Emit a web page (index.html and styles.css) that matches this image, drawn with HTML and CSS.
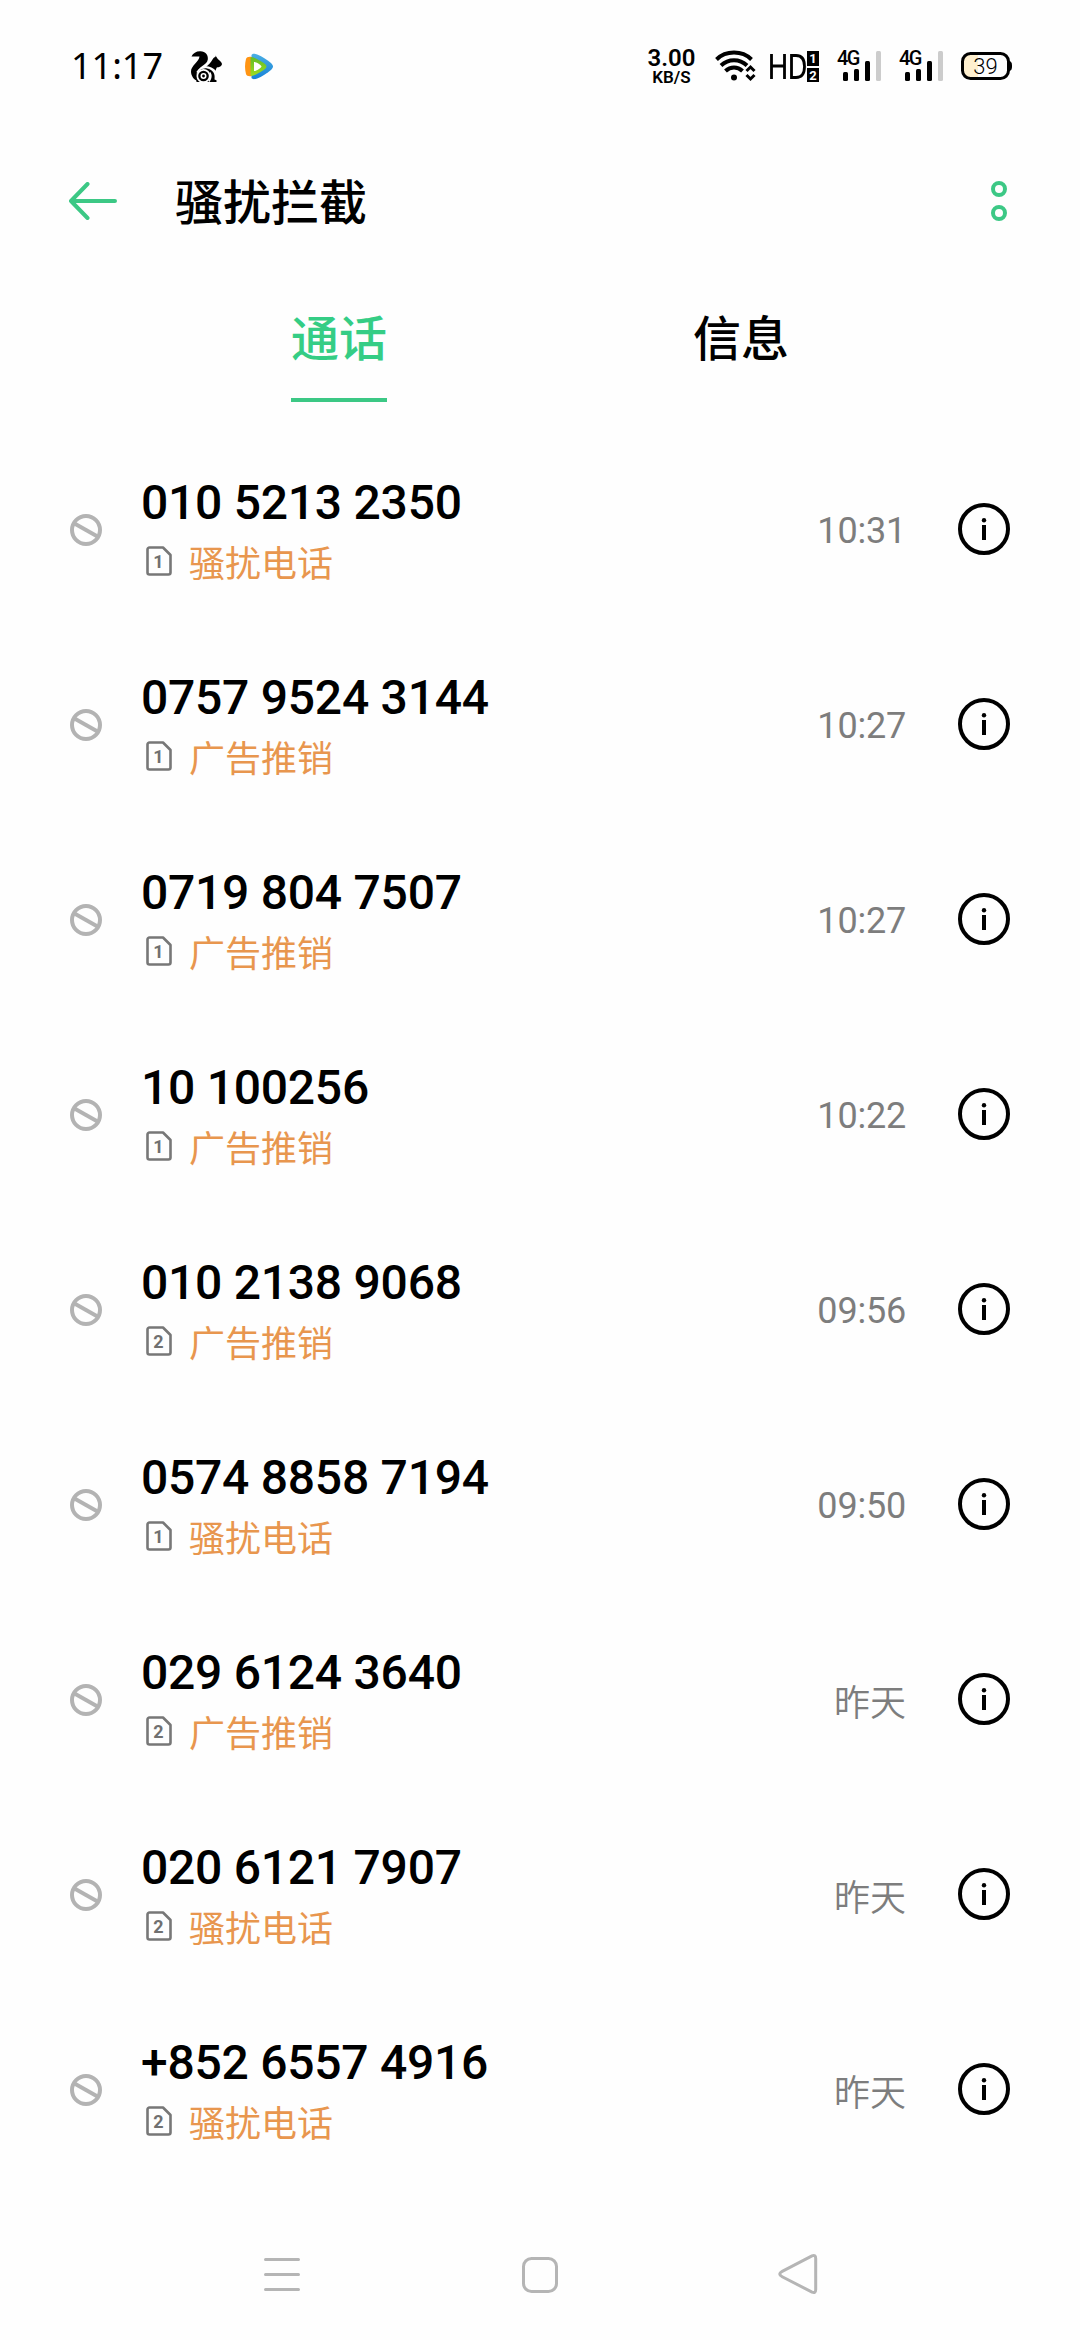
FILE: index.html
```html
<!DOCTYPE html>
<html lang="zh-CN">
<head>
<meta charset="utf-8">
<title>骚扰拦截</title>
<link rel="stylesheet" href="styles.css">
</head>
<body>
<svg class="sprite" aria-hidden="true">
  <symbol id="block" viewBox="0 0 32 32"><g fill="none" stroke="#b3b3b3" stroke-width="4"><circle cx="16" cy="16" r="14"/><path d="M4.500 9.500 27.500 22.500"/></g></symbol>
  <symbol id="info" viewBox="0 0 52 52"><circle cx="26" cy="26" r="24" fill="none" stroke="#000" stroke-width="4"/><circle cx="26" cy="17.300" r="2.200"/><path d="M24 22h4v15h-4z"/></symbol>
  <symbol id="sim" viewBox="0 0 26 30"><path d="M3.500 1.500H17L24.500 9V26.500a2 2 0 0 1-2 2H3.500a2 2 0 0 1-2-2V3.500a2 2 0 0 1 2-2z" fill="none" stroke="#777" stroke-width="2.600" stroke-linejoin="round"/></symbol>
  <symbol id="bars" viewBox="0 0 38 30"><g><rect x="0" y="21" width="5" height="9" rx="1.500"/><rect x="11" y="18" width="5" height="12" rx="1.500"/><rect x="22" y="10" width="5" height="20" rx="1.500"/><rect x="33" y="0" width="5" height="30" rx="1.500" fill="#ccc"/></g></symbol>
</svg>

<header class="status">
  <span class="clock">11:17</span>
  <svg class="squirrel" viewBox="0 0 31 31">
    <path d="M8.500 5.500H.5C2 2 5.500 0 9.500.2c5 .2 8 4 7.300 8.300-.5 3-2.500 4.300-4.800 6-3.500 2.500-5.500 4.500-6.500 8.500-.5 2.300 0 4.500 1 7C2.500 28.500 0 24.500 0 20.500c0-6 8-9.500 8.500-15z"/>
    <path d="M14 17c4-3.500 6-6 7.500-8.500 1-1.500 1.500-2.500 3-2.500V4.500l2.300 3.500c2 2 4 3.200 4.200 5-.3 2.500-3 3.200-5.200 3.500-1 1.500-1.200 3-1.200 4.500-2-3.500-6-4.500-10.600-4z"/>
    <path d="M5 26C5.500 18 14 15 20 19c3.500 2.300 4 6 3.500 9.500l2 .8V31H5.500z"/>
    <path d="M6 21.500C10 15 18 14 25 21" fill="none" stroke="#fff" stroke-width="1.600"/>
    <circle cx="12.500" cy="25" r="7" fill="#fff"/>
    <circle cx="12.500" cy="25" r="5.300"/>
    <circle cx="12.500" cy="25" r="2.200" fill="none" stroke="#fff" stroke-width="1.600"/>
    <path d="M18 30.500c2-3 2.500-6 1-9" fill="none" stroke="#fff" stroke-width="1.500"/>
  </svg>
  <svg class="play" viewBox="0 0 28 27">
    <defs><linearGradient id="blue" x2="0" y2="1"><stop stop-color="#4aaee3"/><stop offset="1" stop-color="#1682d8"/></linearGradient>
    <linearGradient id="green" x2="0" y2="1"><stop stop-color="#63bd27"/><stop offset="1" stop-color="#9ddc22"/></linearGradient></defs>
    <path d="M6.500 2C8 0 11 .3 19 5c6.500 4 9 6.500 9 8.500s-2.500 4.500-9 8.500c-8 4.700-11 5-12.500 3z" fill="url(#blue)"/>
    <path d="M1 6C1.500 4 4 3.500 7 4v19c-3 .5-5.500 0-6-2-1.300-5-1.300-10 0-15z" fill="#ff9413"/>
    <path d="M5.500 4.500c1.500-1 5 .5 10 3.500 4.500 2.700 6 4 6 5.500s-1.500 2.800-6 5.500c-5 3-8.500 4.500-10 3.500z" fill="url(#green)"/>
    <path d="M9 9c1-.8 7.500 3 7.500 4.500S10 18.800 9 18z" fill="#fff"/>
  </svg>
  <span class="grow"></span>
  <span class="speed"><b>3.00</b><small>KB/S</small></span>
  <svg class="wifi" viewBox="0 0 41 32">
    <g fill="none" stroke="#000" stroke-width="4"><path d="M1.500 9.500C11 .3 27 .3 36.500 9.500"/><path d="M6 15.500c7.500-7 18.500-7 26 0"/><path d="M10.500 21c5-4.800 12-4.800 17 0" /></g>
    <circle cx="19" cy="27.500" r="3"/>
    <path d="M31.500 21l4-4 4 4M31.500 25l4 4 4-4" fill="none" stroke="#000" stroke-width="3"/>
  </svg>
  <svg class="hd" viewBox="0 0 49 31">
    <path d="M1.500 3v25M14.500 3v25M1.500 15h13M21.500 4.500h4.500c6 0 8.500 4 8.500 11s-2.500 11-8.500 11h-4.500z" fill="none" stroke="#000" stroke-width="2.800"/>
    <path d="M37 0h12v15H37zM37 17h12v14H37z"/>
    <text x="43" y="12" class="hd-num">1</text><text x="43" y="28.500" class="hd-num">2</text>
  </svg>
  <span class="cell"><span>4G</span><svg><use href="#bars"/></svg></span>
  <span class="cell"><span>4G</span><svg><use href="#bars"/></svg></span>
  <svg class="battery" viewBox="0 0 51 28">
    <path d="M9 2h8v24H9a7.500 7.500 0 0 1-7.500-7.500v-9A7.500 7.500 0 0 1 9 2z" fill="#fff0cf"/>
    <rect x="1.500" y="1.500" width="46" height="25" rx="8" fill="none" stroke="#000" stroke-width="3"/>
    <path d="M47 9c3.500 0 4 2 4 5s-.5 5-4 5z"/>
    <text x="24.500" y="21.500" class="bat-num">39</text>
  </svg>
</header>

<div class="toolbar">
  <svg class="back" viewBox="0 0 48 38"><path d="M18.500 2 2 19l16.500 17M2 19h44" fill="none" stroke="#3cc885" stroke-width="4" stroke-linecap="round" stroke-linejoin="round"/></svg>
  <h1>骚扰拦截</h1>
  <svg class="more" viewBox="0 0 16 40"><g fill="none" stroke="#3cc885" stroke-width="4"><circle cx="8" cy="8" r="6"/><circle cx="8" cy="32" r="6"/></g></svg>
</div>

<nav class="tabs"><span class="tab active">通话</span><span class="tab">信息</span></nav>

<main class="list">
  <div class="row"><svg class="block"><use href="#block"/></svg><div class="who"><b>010 5213 2350</b><p><span class="sim"><svg><use href="#sim"/></svg><i>1</i></span>骚扰电话</p></div><time>10:31</time><svg class="info"><use href="#info"/></svg></div>
  <div class="row"><svg class="block"><use href="#block"/></svg><div class="who"><b>0757 9524 3144</b><p><span class="sim"><svg><use href="#sim"/></svg><i>1</i></span>广告推销</p></div><time>10:27</time><svg class="info"><use href="#info"/></svg></div>
  <div class="row"><svg class="block"><use href="#block"/></svg><div class="who"><b>0719 804 7507</b><p><span class="sim"><svg><use href="#sim"/></svg><i>1</i></span>广告推销</p></div><time>10:27</time><svg class="info"><use href="#info"/></svg></div>
  <div class="row"><svg class="block"><use href="#block"/></svg><div class="who"><b>10 100256</b><p><span class="sim"><svg><use href="#sim"/></svg><i>1</i></span>广告推销</p></div><time>10:22</time><svg class="info"><use href="#info"/></svg></div>
  <div class="row"><svg class="block"><use href="#block"/></svg><div class="who"><b>010 2138 9068</b><p><span class="sim"><svg><use href="#sim"/></svg><i>2</i></span>广告推销</p></div><time>09:56</time><svg class="info"><use href="#info"/></svg></div>
  <div class="row"><svg class="block"><use href="#block"/></svg><div class="who"><b>0574 8858 7194</b><p><span class="sim"><svg><use href="#sim"/></svg><i>1</i></span>骚扰电话</p></div><time>09:50</time><svg class="info"><use href="#info"/></svg></div>
  <div class="row"><svg class="block"><use href="#block"/></svg><div class="who"><b>029 6124 3640</b><p><span class="sim"><svg><use href="#sim"/></svg><i>2</i></span>广告推销</p></div><time class="cjk">昨天</time><svg class="info"><use href="#info"/></svg></div>
  <div class="row"><svg class="block"><use href="#block"/></svg><div class="who"><b>020 6121 7907</b><p><span class="sim"><svg><use href="#sim"/></svg><i>2</i></span>骚扰电话</p></div><time class="cjk">昨天</time><svg class="info"><use href="#info"/></svg></div>
  <div class="row"><svg class="block"><use href="#block"/></svg><div class="who"><b>+852 6557 4916</b><p><span class="sim"><svg><use href="#sim"/></svg><i>2</i></span>骚扰电话</p></div><time class="cjk">昨天</time><svg class="info"><use href="#info"/></svg></div>
</main>

<footer class="navbar">
  <svg viewBox="0 0 40 40"><path d="M3.500 5.500h33M3.500 20.500h33M3.500 35.500h33"/></svg>
  <svg viewBox="0 0 40 40"><rect x="3.500" y="4.500" width="33" height="33" rx="8"/></svg>
  <svg viewBox="0 0 40 40"><path d="M34 1.900 4.200 17.300q-5 2.700 0 5.400L34 38.100q3.700 1.400 3.700-2.500V4.400q0-3.900-3.700-2.500z"/></svg>
</footer>
</body>
</html>
```
FILE: styles.css
```css
* { box-sizing: border-box; margin: 0; padding: 0; }
body {
  width: 1080px;
  height: 2340px;
  overflow: hidden;
  background: #fefefe;
  color: #000;
  font-family: Roboto, "Noto Sans CJK SC", sans-serif;
  display: flex;
  flex-direction: column;
}
svg { display: block; flex: none; }
.sprite { position: absolute; width: 0; height: 0; }

.status { height: 132px; padding: 0 68px 0 71px; display: flex; align-items: center; }
.clock { width: 120px; font: 36px/44px "Noto Sans", sans-serif; white-space: nowrap; }
.squirrel { width: 31px; height: 31px; }
.play { width: 28px; height: 27px; margin-left: 23px; }
.grow { flex: 1; }
.speed { width: 48px; display: flex; flex-direction: column; align-items: center; margin-right: 19px; padding-top: 2px; }
.speed b { font-size: 24px; line-height: 20px; font-weight: 600; }
.speed small { font-size: 17px; line-height: 19px; font-weight: 600; }
.wifi { width: 41px; height: 32px; margin-right: 14.5px; }
.hd { width: 49px; height: 31px; margin-right: 18px; }
.hd-num { fill: #fff; font: bold 13px Roboto, sans-serif; text-anchor: middle; }
.cell { width: 44px; height: 30px; margin-right: 18px; position: relative; display: flex; justify-content: flex-end; }
.cell svg { width: 38px; height: 30px; }
.cell span { position: absolute; left: 0; top: 0; font-size: 20px; line-height: 15px; font-weight: 500; letter-spacing: -1.5px; }
.battery { width: 51px; height: 28px; }
.bat-num { font: 300 22px Roboto, sans-serif; text-anchor: middle; }

.toolbar { height: 138px; padding: 0 73px 0 69px; display: flex; align-items: center; }
.back { width: 48px; height: 38px; margin-right: 58px; }
.toolbar h1 { flex: 1; font-family: "Noto Sans CJK SC", sans-serif; font-size: 48px; line-height: 70px; font-weight: 500; padding-bottom: 4px; }
.more { width: 16px; height: 40px; }

.tabs { height: 162px; padding: 0 138px; display: flex; align-items: flex-start; justify-content: space-around; }
.tab { height: 132px; padding-top: 30px; font: 500 48px/70px "Noto Sans CJK SC", sans-serif; }
.tab.active { color: #35cd85; border-bottom: 4px solid #3cc885; }

.list { height: 1755px; }
.row { height: 195px; padding: 0 70px; display: flex; align-items: center; }
.block { width: 32px; height: 32px; margin-right: 39px; }
.who { flex: 1; padding-top: 3px; }
.who b { display: block; font-size: 48px; line-height: 60px; font-weight: 500; letter-spacing: -0.25px; white-space: nowrap; }
.who p { display: flex; align-items: center; font: 36px/56px "Noto Sans CJK SC", sans-serif; color: #e8964e; padding-left: 5px; }
.sim { position: relative; width: 26px; height: 30px; margin-right: 17px; }
.sim svg { width: 26px; height: 30px; }
.sim i { position: absolute; left: 0; top: 0; width: 25px; text-align: center; font: bold 18px/31px Roboto, sans-serif; color: #707070; }
.row time { font-size: 36px; line-height: 50px; color: #7d7d7d; margin-right: 52px; padding-top: 3px; letter-spacing: -0.2px; }
.row .cjk { font-family: "Noto Sans CJK SC", sans-serif; font-weight: 350; padding-top: 0; letter-spacing: 0; }
.info { width: 52px; height: 52px; margin-bottom: 1px; }

.navbar { flex: 1; padding: 0 262px 0; display: flex; justify-content: space-between; align-items: flex-start; padding-top: 67px; }
.navbar svg { width: 40px; height: 40px; fill: none; stroke: #b5b5b5; stroke-width: 3; stroke-linecap: round; }
```
